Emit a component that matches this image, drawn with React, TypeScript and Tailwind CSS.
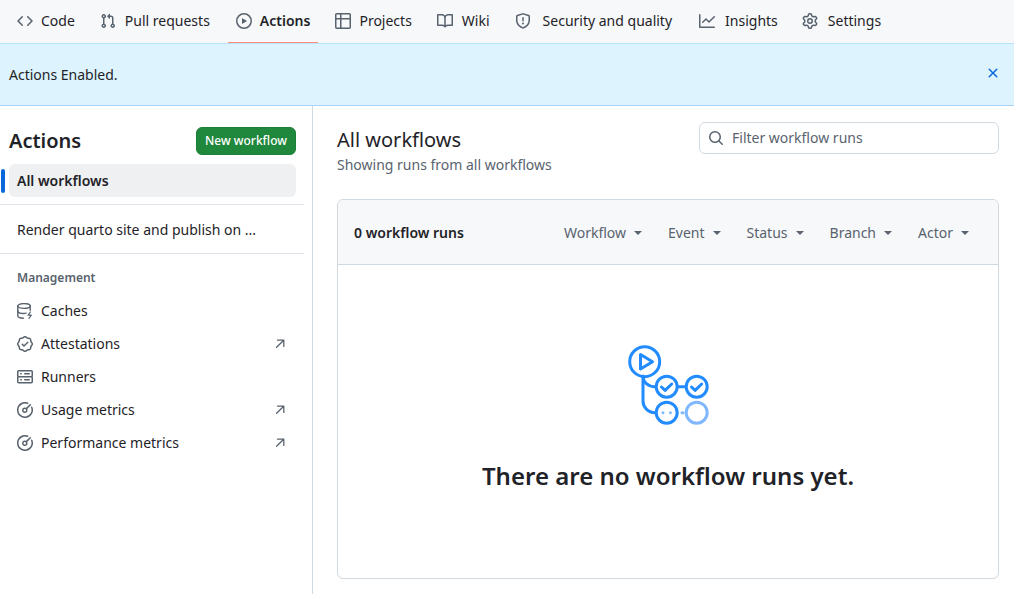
import React from "react";

const P: Record<string, string> = {
  code: "m11.28 3.22 4.25 4.25a.75.75 0 0 1 0 1.06l-4.25 4.25a.749.749 0 0 1-1.275-.326.749.749 0 0 1 .215-.734L13.94 8l-3.72-3.72a.749.749 0 0 1 .326-1.275.749.749 0 0 1 .734.215Zm-6.56 0a.751.751 0 0 1 1.042.018.751.751 0 0 1 .018 1.042L2.06 8l3.72 3.72a.749.749 0 0 1-.326 1.275.749.749 0 0 1-.734-.215L.47 8.53a.75.75 0 0 1 0-1.06Z",
  pr: "M1.5 3.25a2.25 2.25 0 1 1 3 2.122v5.256a2.251 2.251 0 1 1-1.5 0V5.372A2.25 2.25 0 0 1 1.5 3.25Zm5.677-.177L9.573.677A.25.25 0 0 1 10 .854V2.5h1A2.5 2.5 0 0 1 13.5 5v5.628a2.251 2.251 0 1 1-1.5 0V5a1 1 0 0 0-1-1h-1v1.646a.25.25 0 0 1-.427.177L7.177 3.427a.25.25 0 0 1 0-.354ZM3.75 2.5a.75.75 0 1 0 0 1.5.75.75 0 0 0 0-1.5Zm0 9.5a.75.75 0 1 0 0 1.5.75.75 0 0 0 0-1.5Zm8.25.75a.75.75 0 1 0 1.5 0 .75.75 0 0 0-1.5 0Z",
  play: "M8 0a8 8 0 1 1 0 16A8 8 0 0 1 8 0ZM1.5 8a6.5 6.5 0 1 0 13 0 6.5 6.5 0 0 0-13 0Zm4.879-2.773 4.264 2.559a.25.25 0 0 1 0 .428l-4.264 2.559A.25.25 0 0 1 6 10.559V5.442a.25.25 0 0 1 .379-.215Z",
  table: "M0 1.75C0 .784.784 0 1.75 0h12.5C15.216 0 16 .784 16 1.75v12.5A1.75 1.75 0 0 1 14.25 16H1.75A1.75 1.75 0 0 1 0 14.25ZM6.5 6.5v8h7.75a.25.25 0 0 0 .25-.25V6.5Zm8-1.5V1.75a.25.25 0 0 0-.25-.25H6.5V5Zm-13 1.5v7.75c0 .138.112.25.25.25H5v-8ZM5 5V1.5H1.75a.25.25 0 0 0-.25.25V5Z",
  book: "M0 1.75A.75.75 0 0 1 .75 1h4.253c1.227 0 2.317.59 3 1.501A3.743 3.743 0 0 1 11.006 1h4.245a.75.75 0 0 1 .75.75v10.5a.75.75 0 0 1-.75.75h-4.507a2.25 2.25 0 0 0-1.591.659l-.622.621a.75.75 0 0 1-1.06 0l-.622-.621A2.25 2.25 0 0 0 5.258 13H.75a.75.75 0 0 1-.75-.75Zm7.251 10.324.004-5.073-.002-2.253A2.25 2.25 0 0 0 5.003 2.5H1.5v9h3.757a3.75 3.75 0 0 1 1.994.574ZM8.755 4.75l-.004 7.322a3.752 3.752 0 0 1 1.992-.572H14.5v-9h-3.495a2.25 2.25 0 0 0-2.25 2.25Z",
  shield: "M7.467.133a1.748 1.748 0 0 1 1.066 0l5.25 1.68A1.75 1.75 0 0 1 15 3.48V7c0 1.566-.32 3.182-1.303 4.682-.983 1.498-2.585 2.813-5.032 3.855a1.697 1.697 0 0 1-1.33 0c-2.447-1.042-4.049-2.357-5.032-3.855C1.32 10.182 1 8.566 1 7V3.48a1.75 1.75 0 0 1 1.217-1.667Zm.61 1.429a.25.25 0 0 0-.153 0l-5.25 1.68a.25.25 0 0 0-.174.238V7c0 1.358.275 2.666 1.057 3.86.784 1.194 2.121 2.34 4.366 3.297a.196.196 0 0 0 .154 0c2.245-.956 3.582-2.104 4.366-3.298C13.225 9.666 13.5 8.36 13.5 7V3.48a.251.251 0 0 0-.174-.237l-5.25-1.68ZM8.75 4.75v3a.75.75 0 0 1-1.5 0v-3a.75.75 0 0 1 1.5 0ZM9 10.5a1 1 0 1 1-2 0 1 1 0 0 1 2 0Z",
  graph: "M1.5 1.75V13.5h13.75a.75.75 0 0 1 0 1.5H.75a.75.75 0 0 1-.75-.75V1.75a.75.75 0 0 1 1.5 0Zm14.28 2.53-5.25 5.25a.75.75 0 0 1-1.06 0L7 7.06 4.28 9.78a.751.751 0 0 1-1.042-.018.751.751 0 0 1-.018-1.042l3.25-3.25a.75.75 0 0 1 1.06 0L10 7.94l4.72-4.72a.751.751 0 0 1 1.042.018.751.751 0 0 1 .018 1.042Z",
  gear: "M8 0a8.2 8.2 0 0 1 .701.031C9.444.095 9.99.645 10.16 1.29l.288 1.107c.018.066.079.158.212.224.231.114.454.243.668.386.123.082.233.09.299.071l1.103-.303c.644-.176 1.392.021 1.82.63.27.385.506.792.704 1.218.315.675.111 1.422-.364 1.891l-.814.806c-.049.048-.098.147-.088.294.016.257.016.515 0 .772-.01.147.038.246.088.294l.814.806c.475.469.679 1.216.364 1.891a7.977 7.977 0 0 1-.704 1.217c-.428.61-1.176.807-1.82.63l-1.102-.302c-.067-.019-.177-.011-.3.071a5.909 5.909 0 0 1-.668.386c-.133.066-.194.158-.211.224l-.29 1.106c-.168.646-.715 1.196-1.458 1.26a8.006 8.006 0 0 1-1.402 0c-.743-.064-1.289-.614-1.458-1.26l-.289-1.106c-.018-.066-.079-.158-.212-.224a5.738 5.738 0 0 1-.668-.386c-.123-.082-.233-.09-.299-.071l-1.103.303c-.644.176-1.392-.021-1.82-.63a8.12 8.12 0 0 1-.704-1.218c-.315-.675-.111-1.422.363-1.891l.815-.806c.05-.048.098-.147.088-.294a6.214 6.214 0 0 1 0-.772c.01-.147-.038-.246-.088-.294l-.815-.806C.635 6.045.431 5.298.746 4.623a7.92 7.92 0 0 1 .704-1.217c.428-.61 1.176-.807 1.82-.63l1.102.302c.067.019.177.011.3-.071.214-.143.437-.272.668-.386.133-.066.194-.158.211-.224l.29-1.106C6.009.645 6.556.095 7.299.03 7.53.01 7.764 0 8 0Zm-.571 1.525c-.036.003-.108.036-.137.146l-.289 1.105c-.147.561-.549.967-.998 1.189-.173.086-.34.183-.5.29-.417.278-.97.423-1.529.27l-1.103-.303c-.109-.03-.175.016-.195.045-.22.312-.412.644-.573.99-.014.031-.021.11.059.19l.815.806c.411.406.562.957.53 1.456a4.709 4.709 0 0 0 0 .582c.032.499-.119 1.05-.53 1.456l-.815.806c-.081.08-.073.159-.059.19.162.346.353.677.573.989.02.03.085.076.195.046l1.102-.303c.56-.153 1.113-.008 1.53.27.161.107.328.204.501.29.447.222.85.629.997 1.189l.289 1.105c.029.109.101.143.137.146a6.6 6.6 0 0 0 1.142 0c.036-.003.108-.036.137-.146l.289-1.105c.147-.561.549-.967.998-1.189.173-.086.34-.183.5-.29.417-.278.97-.423 1.529-.27l1.103.303c.109.029.175-.016.195-.045.22-.313.411-.644.573-.99.014-.031.021-.11-.059-.19l-.815-.806c-.411-.406-.562-.957-.53-1.456a4.709 4.709 0 0 0 0-.582c-.032-.499.119-1.05.53-1.456l.815-.806c.081-.08.073-.159.059-.19a6.464 6.464 0 0 0-.573-.989c-.02-.03-.085-.076-.195-.046l-1.102.303c-.56.153-1.113.008-1.53-.27a4.44 4.44 0 0 0-.501-.29c-.447-.222-.85-.629-.997-1.189l-.289-1.105c-.029-.11-.101-.143-.137-.146a6.6 6.6 0 0 0-1.142 0ZM11 8a3 3 0 1 1-6 0 3 3 0 0 1 6 0ZM9.5 8a1.5 1.5 0 1 0-3.001.001A1.5 1.5 0 0 0 9.5 8Z",
  x: "M3.72 3.72a.75.75 0 0 1 1.06 0L8 6.94l3.22-3.22a.749.749 0 0 1 1.275.326.749.749 0 0 1-.215.734L9.06 8l3.22 3.22a.749.749 0 0 1-.326 1.275.749.749 0 0 1-.734-.215L8 9.06l-3.22 3.22a.751.751 0 0 1-1.042-.018.751.751 0 0 1-.018-1.042L6.94 8 3.72 4.78a.75.75 0 0 1 0-1.06Z",
  search: "M10.68 11.74a6 6 0 0 1-7.922-8.982 6 6 0 0 1 8.982 7.922l3.04 3.04a.749.749 0 0 1-.326 1.275.749.749 0 0 1-.734-.215ZM11.5 7a4.499 4.499 0 1 0-8.997 0A4.499 4.499 0 0 0 11.5 7Z",
  verified: "m9.585.52.929.68c.153.112.331.186.518.215l1.138.175a2.678 2.678 0 0 1 2.24 2.24l.174 1.139c.029.187.103.365.215.518l.68.928a2.677 2.677 0 0 1 0 3.17l-.68.928a1.174 1.174 0 0 0-.215.518l-.175 1.138a2.678 2.678 0 0 1-2.241 2.241l-1.138.175a1.17 1.17 0 0 0-.518.215l-.928.68a2.677 2.677 0 0 1-3.17 0l-.928-.68a1.174 1.174 0 0 0-.518-.215L3.83 14.41a2.678 2.678 0 0 1-2.24-2.24l-.175-1.138a1.17 1.17 0 0 0-.215-.518l-.68-.928a2.677 2.677 0 0 1 0-3.17l.68-.928c.112-.153.186-.331.215-.518l.175-1.14a2.678 2.678 0 0 1 2.24-2.24l1.139-.175c.187-.029.365-.103.518-.215l.928-.68a2.677 2.677 0 0 1 3.17 0ZM7.303 1.728l-.927.68a2.67 2.67 0 0 1-1.18.489l-1.137.174a1.179 1.179 0 0 0-.987.987l-.174 1.136a2.677 2.677 0 0 1-.489 1.18l-.68.928a1.18 1.18 0 0 0 0 1.394l.68.927c.256.348.424.753.489 1.18l.174 1.137c.078.509.478.909.987.987l1.136.174a2.67 2.67 0 0 1 1.18.489l.928.68c.414.305.979.305 1.394 0l.927-.68a2.67 2.67 0 0 1 1.18-.489l1.137-.174a1.18 1.18 0 0 0 .987-.987l.174-1.136a2.67 2.67 0 0 1 .489-1.18l.68-.928a1.176 1.176 0 0 0 0-1.394l-.68-.927a2.686 2.686 0 0 1-.489-1.18l-.174-1.137a1.179 1.179 0 0 0-.987-.987l-1.136-.174a2.677 2.677 0 0 1-1.18-.489l-.928-.68a1.176 1.176 0 0 0-1.394 0ZM11.28 6.78l-3.75 3.75a.75.75 0 0 1-1.06 0L4.72 8.78a.751.751 0 0 1 .018-1.042.751.751 0 0 1 1.042-.018l1.22 1.22 3.22-3.22a.751.751 0 0 1 1.042.018.751.751 0 0 1 .018 1.042Z",
  server: "M1.75 1h12.5c.966 0 1.75.784 1.75 1.75v4c0 .372-.116.717-.314 1 .198.283.314.628.314 1v4a1.75 1.75 0 0 1-1.75 1.75H1.75A1.75 1.75 0 0 1 0 12.75v-4c0-.358.109-.707.314-1a1.739 1.739 0 0 1-.314-1v-4C0 1.784.784 1 1.75 1ZM1.5 2.75v4c0 .138.112.25.25.25h12.5a.25.25 0 0 0 .25-.25v-4a.25.25 0 0 0-.25-.25H1.75a.25.25 0 0 0-.25.25Zm.25 5.75a.25.25 0 0 0-.25.25v4c0 .138.112.25.25.25h12.5a.25.25 0 0 0 .25-.25v-4a.25.25 0 0 0-.25-.25ZM7 4.75A.75.75 0 0 1 7.75 4h4.5a.75.75 0 0 1 0 1.5h-4.5A.75.75 0 0 1 7 4.75ZM7.75 10h4.5a.75.75 0 0 1 0 1.5h-4.5a.75.75 0 0 1 0-1.5ZM3 4.75A.75.75 0 0 1 3.75 4h.5a.75.75 0 0 1 0 1.5h-.5A.75.75 0 0 1 3 4.75ZM3.75 10h.5a.75.75 0 0 1 0 1.5h-.5a.75.75 0 0 1 0-1.5Z",
  arrow: "M5.22 14.78a.75.75 0 0 0 1.06 0l7.22-7.22v5.69a.75.75 0 0 0 1.5 0v-7.5a.75.75 0 0 0-.75-.75h-7.5a.75.75 0 0 0 0 1.5h5.69l-7.22 7.22a.75.75 0 0 0 0 1.06Z",
};

function Oct({ name, className = "" }: { name: string; className?: string }) {
  return (
    <svg viewBox="0 0 16 16" width="16" height="16" fill="currentColor" className={`shrink-0 ${className}`}>
      <path d={P[name]} />
    </svg>
  );
}

function CacheIcon() {
  return (
    <svg viewBox="0 0 16 16" width="16" height="16" fill="none" stroke="currentColor" strokeWidth="1.4" strokeLinecap="round" strokeLinejoin="round" className="shrink-0">
      <ellipse cx="7" cy="3" rx="6.2" ry="2.4" />
      <path d="M.8 3v9.8c0 1.3 2.4 2.4 5.6 2.4" />
      <path d="M.8 8c0 1.3 2.6 2.5 5.8 2.5.9 0 1.8-.1 2.5-.3" />
      <path d="M13.2 3v4.2" />
      <path d="M13.4 9l-2.3 3.2h3.2l-2.3 3.3" strokeWidth="1.2" />
    </svg>
  );
}

function MeterIcon() {
  return (
    <svg viewBox="0 0 16 16" width="16" height="16" fill="none" stroke="currentColor" strokeWidth="1.5" strokeLinecap="round" className="shrink-0">
      <path d="M10.7 1.3A7.25 7.25 0 1 0 14.7 5.3" />
      <circle cx="7.8" cy="8.2" r="2" strokeWidth="1.4" />
      <path d="M9.4 6.6l3.9-3.9" />
    </svg>
  );
}

const tabs = [
  { icon: "code", label: "Code", cls: "gap-2 pb-[2px]" },
  { icon: "pr", label: "Pull requests", cls: "gap-[9px] pb-[2px]" },
  { icon: "play", label: "Actions", cls: "gap-2 ml-px pb-px font-semibold border-b border-[#fd8c73]" },
  { icon: "table", label: "Projects", cls: "gap-2 pb-[2px]" },
  { icon: "book", label: "Wiki", cls: "gap-[9px] pb-[2px]" },
  { icon: "shield", label: "Security and quality", cls: "gap-3 pb-[2px]" },
  { icon: "graph", label: "Insights", cls: "gap-[10px] ml-[2px] pb-[2px]" },
  { icon: "gear", label: "Settings", cls: "gap-[10px] -ml-px pb-[2px]" },
];

const manage: { label: string; icon: React.ReactNode; ext?: boolean }[] = [
  { label: "Caches", icon: <CacheIcon /> },
  { label: "Attestations", icon: <Oct name="verified" />, ext: true },
  { label: "Runners", icon: <Oct name="server" /> },
  { label: "Usage metrics", icon: <MeterIcon />, ext: true },
  { label: "Performance metrics", icon: <MeterIcon />, ext: true },
];

const filters = ["Workflow", "Event", "Status", "Branch", "Actor"];

function Blank() {
  return (
    <svg viewBox="623 340 90 90" width="90" height="90" fill="none" stroke="#218bff" strokeWidth="3" strokeLinecap="round" strokeLinejoin="round">
      <circle cx="644.7" cy="361.7" r="15" />
      <path d="M640.5 354.5L652.5 361.7L640.5 369Z" />
      <path d="M643 378v23c0 6 5 11.7 12 11.7" />
      <path d="M643 376c0 6 5 10.7 12 10.7" />
      <circle cx="666.7" cy="386.7" r="10.5" />
      <path d="M661.5 387l3.6 3.4 6.6-6.4" />
      <path d="M677.5 386.7h8" />
      <circle cx="696.7" cy="386.7" r="10.5" />
      <path d="M691.5 387l3.6 3.4 6.6-6.4" />
      <circle cx="666.7" cy="412.7" r="10.5" />
      <circle cx="663" cy="412.7" r="1.5" stroke="none" fill="#80b8ff" />
      <circle cx="670.4" cy="412.7" r="1.5" stroke="none" fill="#80b8ff" />
      <path d="M682 412.7h1" stroke="#80b8ff" />
      <circle cx="696.7" cy="412.7" r="10.5" stroke="#80b8ff" />
    </svg>
  );
}

export default function App() {
  return (
    <div className="h-[594px] w-[1014px] overflow-hidden bg-white font-['Noto_Sans',sans-serif] text-sm text-[#1f2328] flex flex-col">
      <nav className="h-11 shrink-0 bg-[#f6f8fa] border-b border-[#b6e3ff] flex items-stretch pl-[9px] gap-[9px]">
        {tabs.map((t) => (
          <div key={t.label} className={`h-[43px] flex items-center px-2 ${t.cls}`}>
            <Oct name={t.icon} className="text-[#59636e]" />
            <span>{t.label}</span>
          </div>
        ))}
      </nav>

      <div className="h-[62px] shrink-0 bg-[#ddf4ff] border-b border-[#a8d4fb] flex justify-between pl-[9px] pr-[13px]">
        <span className="self-center">Actions Enabled.</span>
        <Oct name="x" className="self-center mb-[3px] text-[#0969da]" />
      </div>

      <div className="flex-1 flex min-h-0">
        <aside className="w-[313px] shrink-0 border-r border-[#d1d9e0]">
          <div className="w-[304px]">
            <div className="flex items-center justify-between pl-[9px] pr-2 pt-[21px]">
              <h2 className="text-xl font-semibold leading-7">Actions</h2>
              <button className="h-7 w-[100px] rounded-md bg-[#1f883d] border border-[#1a7f37] text-white text-xs font-medium">New workflow</button>
            </div>
            <div className="relative mt-[9px] ml-[9px] mr-2 h-[33px] rounded-md bg-[#eef0f2] flex items-center px-2 font-semibold">
              All workflows
              <span className="absolute -left-2 top-[5px] h-6 w-1 rounded-md bg-[#0969da]" />
            </div>
            <div className="mt-[7px] border-t border-[#dde3e9]" />
            <div className="h-12 flex items-center pl-[17px] pt-[2px]">Render quarto site and publish on ...</div>
            <div className="border-t border-[#dde3e9]" />
            <div className="pl-[17px] mt-4 text-xs font-semibold leading-[16px] text-[#59636e]">Management</div>
            <div className="mt-2">
              {manage.map((m) => (
                <div key={m.label} className="h-[33px] flex items-center pl-[17px] pr-[17px] gap-2">
                  <span className="text-[#59636e]">{m.icon}</span>
                  <span className="flex-1">{m.label}</span>
                  {m.ext && <Oct name="arrow" className="text-[#59636e] scale-[.85] -translate-x-[.5px] -translate-y-[2px]" />}
                </div>
              ))}
            </div>
          </div>
        </aside>

        <main className="flex-1 min-w-0 pl-6 pr-[15px]">
          <div className="flex justify-between items-start pt-4">
            <div>
              <h1 className="text-xl leading-9 font-normal">All workflows</h1>
              <p className="text-[#59636e] leading-5 -mt-[3px]">Showing runs from all workflows</p>
            </div>
            <div className="h-8 w-[300px] rounded-md border border-[#d1d9e0] flex items-center gap-2 pl-2 text-[#59636e]">
              <Oct name="search" />
              <span>Filter workflow runs</span>
            </div>
          </div>

          <section className="mt-[24px] h-[380px] rounded-md border border-[#d1d9e0] flex flex-col">
            <div className="h-[65px] shrink-0 bg-[#f6f8fa] rounded-t-md border-b border-[#d1d9e0] flex items-center justify-between pl-4 pr-[29px] pt-[2px]">
              <span className="font-semibold">0 workflow runs</span>
              <div className="flex items-center gap-[26px] text-[#59636e]">
                {filters.map((f) => (
                  <span key={f} className="flex items-center gap-2">
                    {f}
                    <span className="w-0 h-0 border-x-[4.5px] border-x-transparent border-t-[4.5px] border-t-[#59636e]" />
                  </span>
                ))}
              </div>
            </div>
            <div className="flex flex-col items-center pt-[75px]">
              <Blank />
              <h3 className="text-2xl font-semibold leading-9 mt-[28px]">There are no workflow runs yet.</h3>
            </div>
          </section>
        </main>
      </div>
    </div>
  );
}
